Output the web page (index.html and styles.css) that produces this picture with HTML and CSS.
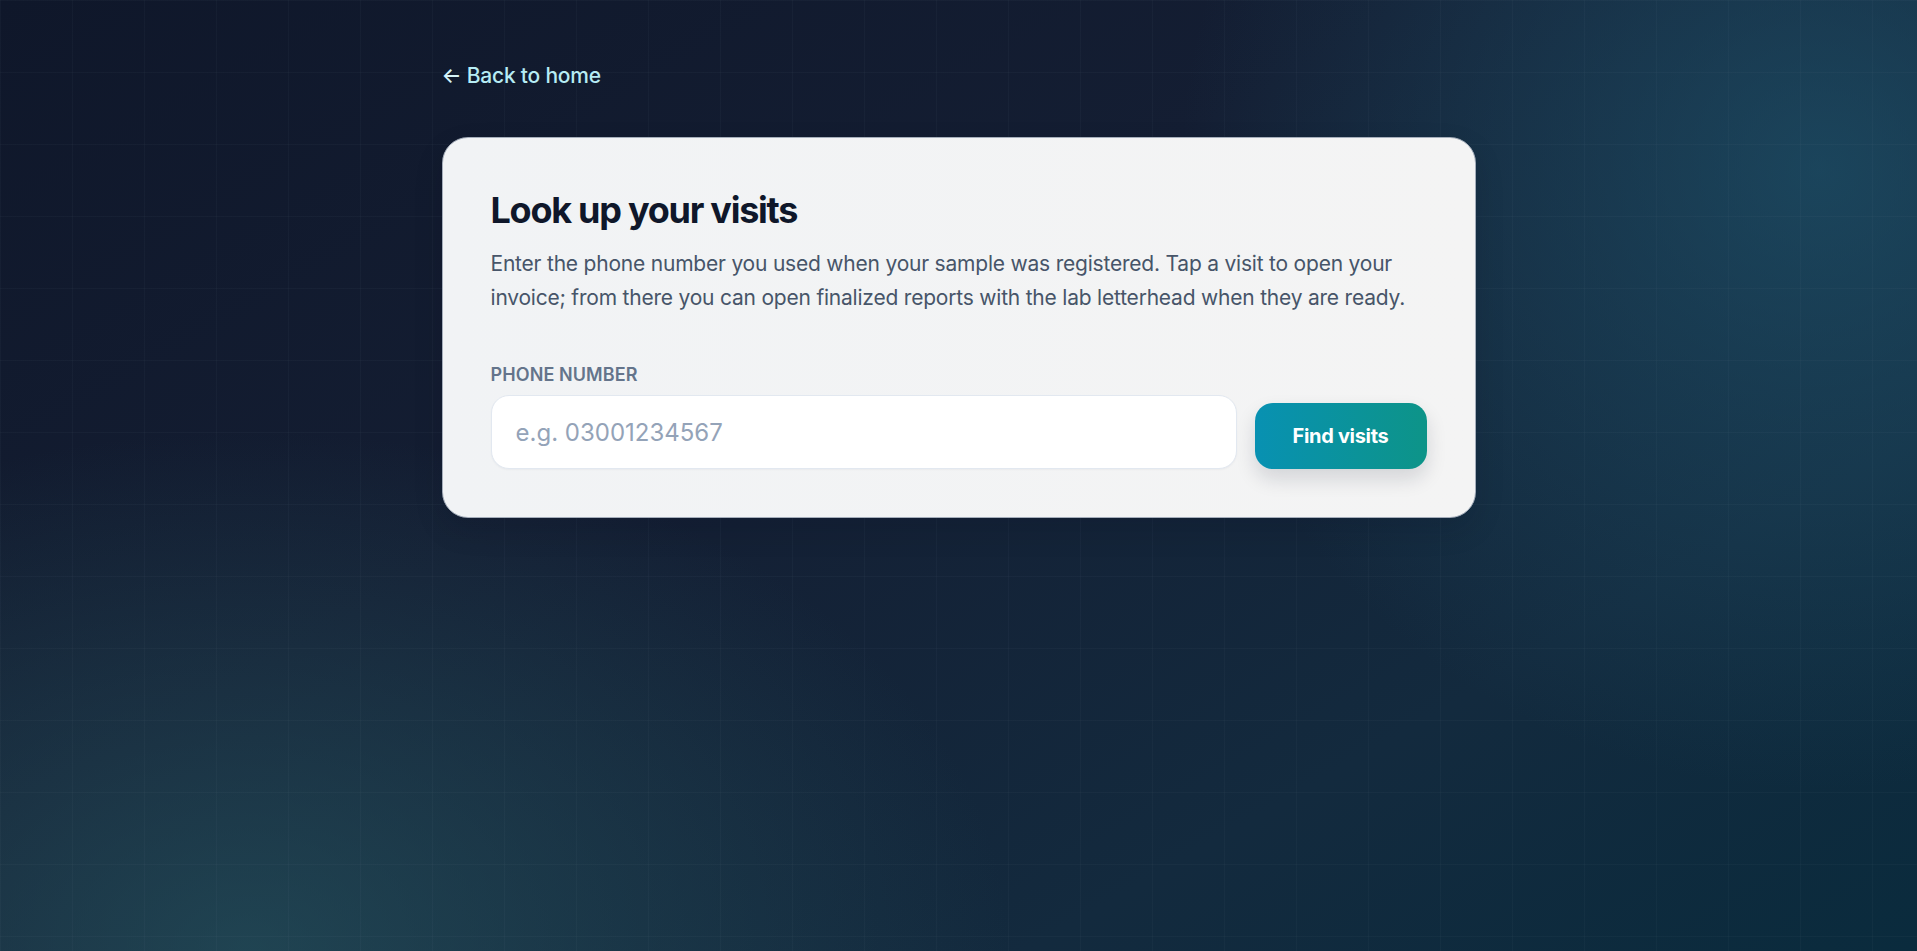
FILE: index.html
```html
<!DOCTYPE html>
<html lang="en">
<head>
<meta charset="utf-8">
<title>Look up your visits</title>
<link rel="stylesheet" href="styles.css">
</head>
<body>
<main class="page">
  <a class="back-link" href="#"><span class="back-arrow">←</span> Back to home</a>
  <section class="card">
    <h1 class="card-title">Look up your visits</h1>
    <p class="card-desc">Enter the phone number you used when your sample was registered. Tap a visit to open your invoice; from there you can open finalized reports with the lab letterhead when they are ready.</p>
    <form class="lookup-form">
      <label class="field-label" for="phone">Phone number</label>
      <div class="field-row">
        <input id="phone" class="field-input" type="tel" placeholder="e.g. 03001234567">
        <button class="btn-primary" type="button">Find visits</button>
      </div>
    </form>
  </section>
</main>
</body>
</html>
```

FILE: styles.css
```css
* { box-sizing: border-box; }

html, body {
  margin: 0;
  min-height: 100%;
}

body {
  min-height: 100vh;
  font-family: Inter, "Noto Sans", "Liberation Sans", sans-serif;
  background-color: #111a2e;
  background-image:
    linear-gradient(rgba(148, 163, 184, 0.045) 1px, transparent 1px),
    linear-gradient(90deg, rgba(148, 163, 184, 0.045) 1px, transparent 1px),
    radial-gradient(ellipse 640px 620px at 1820px 170px, rgba(32, 90, 115, 0.6), rgba(32, 90, 115, 0) 100%),
    radial-gradient(ellipse 760px 520px at 250px 951px, rgba(40, 90, 100, 0.6), rgba(40, 90, 100, 0) 100%),
    linear-gradient(150deg, #0f172a 0%, #141e33 40%, #132a3e 75%, #0a2b3d 100%);
  background-size: 72px 72px, 72px 72px, 100% 100%, 100% 100%, 100% 100%;
  background-attachment: fixed;
}

.page {
  width: 1034px;
  margin: 0 auto;
  padding-top: 62px;
  padding-bottom: 60px;
}

.back-link {
  display: inline-block;
  font-size: 21px;
  line-height: 28px;
  font-weight: 500;
  color: #b6ecf4;
  text-decoration: none;
  letter-spacing: -0.01em;
}

.back-arrow {
  color: #d6f3f8;
}

.card {
  margin-top: 47px;
  background: linear-gradient(90deg, #f1f3f5 0%, #f4f4f4 100%);
  border: 1px solid #a5aebb;
  border-radius: 26px;
  padding: 48px;
  box-shadow: 0 12px 30px rgba(2, 6, 23, 0.12);
}

.card-title {
  margin: 0;
  font-size: 36px;
  line-height: 48px;
  font-weight: 700;
  letter-spacing: -0.035em;
  color: #0f172a;
}

.card-desc {
  margin: 13px 0 0;
  font-size: 21px;
  line-height: 34px;
  font-weight: 400;
  letter-spacing: -0.01em;
  color: #475569;
}

.lookup-form {
  margin-top: 48px;
}

.field-label {
  display: block;
  font-size: 18px;
  line-height: 24px;
  font-weight: 600;
  letter-spacing: 0.005em;
  text-transform: uppercase;
  color: #64748b;
}

.field-row {
  display: flex;
  align-items: flex-end;
  gap: 18px;
  margin-top: 8px;
}

.field-input {
  flex: 1;
  height: 74px;
  padding: 0 24px;
  border: 1px solid #e2e8f0;
  border-radius: 18px;
  background: #ffffff;
  font-family: inherit;
  font-size: 24px;
  color: #0f172a;
  outline: none;
  box-shadow: 0 1px 2px rgba(15, 23, 42, 0.04);
}

.field-input::placeholder {
  color: #94a3b8;
  opacity: 1;
}

.btn-primary {
  width: 172px;
  height: 66px;
  border: none;
  border-radius: 18px;
  background: linear-gradient(90deg, #0891b2 0%, #0d9488 100%);
  color: #ffffff;
  font-family: inherit;
  font-size: 20px;
  font-weight: 700;
  letter-spacing: -0.015em;
  cursor: pointer;
  box-shadow: 0 10px 20px rgba(15, 23, 42, 0.14);
}
```
